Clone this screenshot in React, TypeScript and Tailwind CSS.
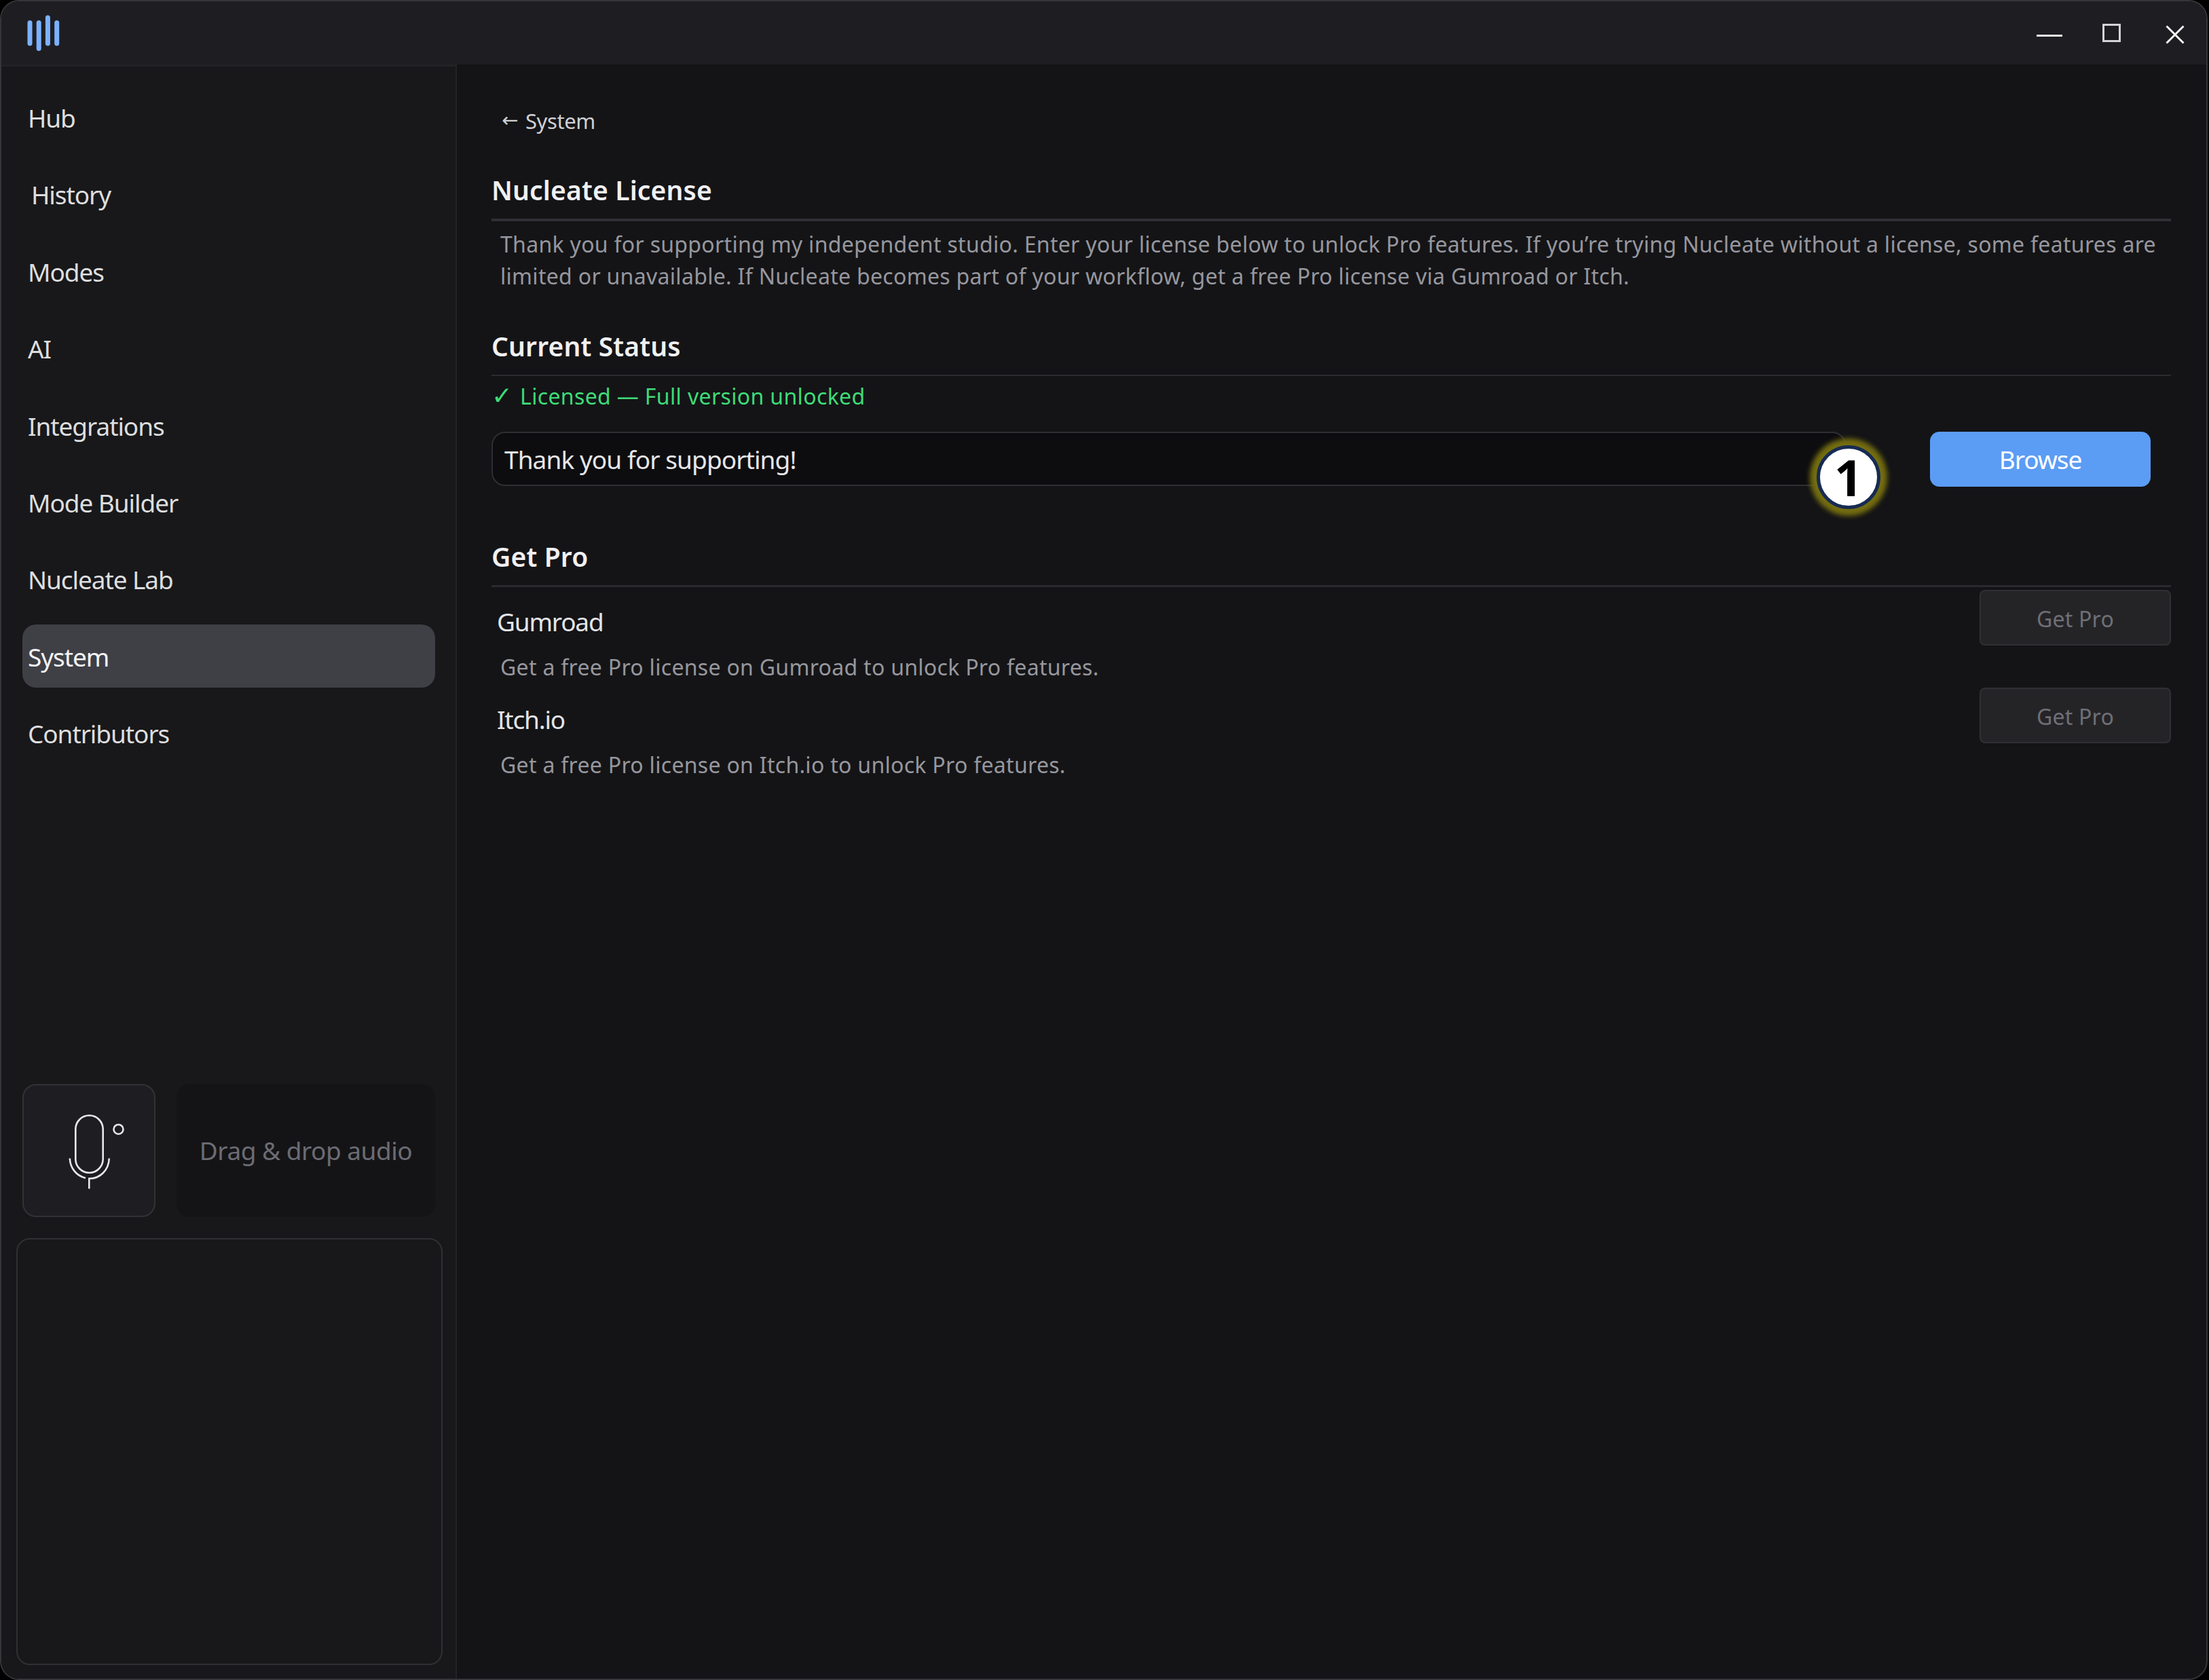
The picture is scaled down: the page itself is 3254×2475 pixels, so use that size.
import { useState } from "react";
import type { ReactNode } from "react";

const NAV = [
  { label: "Hub", css: "pl-[8px]" },
  { label: "History", css: "pl-[13px]" },
  { label: "Modes", css: "pl-[8px]" },
  { label: "AI", css: "pl-[8px]" },
  { label: "Integrations", css: "pl-[8px]" },
  { label: "Mode Builder", css: "pl-[8px]" },
  { label: "Nucleate Lab", css: "pl-[8px]" },
  { label: "System", css: "pl-[8px]" },
  { label: "Contributors", css: "pl-[8px]" },
];

const STORES = [
  { name: "Gumroad", text: "Get a free Pro license on Gumroad to unlock Pro features." },
  { name: "Itch.io", text: "Get a free Pro license on Itch.io to unlock Pro features." },
];

function Logo() {
  return (
    <svg width="48" height="54" viewBox="0 0 48 54" fill="#7cb1ff">
      <rect x="0.5" y="8" width="7" height="37.5" rx="3.5" />
      <rect x="13.7" y="8" width="7" height="45" rx="3.5" />
      <rect x="26.9" y="0.5" width="7" height="45" rx="3.5" />
      <rect x="40.2" y="8" width="7" height="37.5" rx="3.5" />
    </svg>
  );
}

function MicIcon() {
  return (
    <svg width="84" height="112" viewBox="0 0 84 112" fill="none" stroke="#e8e8ea" strokeWidth="2.6">
      <rect x="11.3" y="2.3" width="40.4" height="84.4" rx="20.2" />
      <path d="M2.8 65.5c.6 14.5 9.5 25.5 23.2 29" />
      <path d="M60.8 65.5c-.6 17.5-13.3 29.8-29.5 29.8v15" />
      <circle cx="74.5" cy="22.7" r="7" />
    </svg>
  );
}

function Heading({ children }: { children: ReactNode }) {
  return <h2 className="h-[60px] text-[39px] leading-[60px] font-semibold tracking-[0.15px] text-[#f0f0f2]">{children}</h2>;
}

function TitleBar() {
  return (
    <header className="flex h-[93px] shrink-0 justify-between bg-[#1e1e22]">
      <div className="pl-[38px] pt-[20px]"><Logo /></div>
      <div className="flex h-full items-start">
        <button className="mr-[59px] mt-[49px] h-[3px] w-[38px] bg-[#ececee]" aria-label="Minimize" />
        <button className="mr-[66px] mt-[33px] h-[27px] w-[27px] border-3 border-[#d4d4d6]" aria-label="Maximize" />
        <button className="mr-[32px] mt-[35px]" aria-label="Close">
          <svg width="28" height="28" viewBox="0 0 28 28" stroke="#f4f4f5" strokeWidth="3">
            <path d="M1.5 1.5l25 25M26.5 1.5l-25 25" />
          </svg>
        </button>
      </div>
    </header>
  );
}

function Sidebar() {
  const [active, setActive] = useState("System");

  return (
    <aside className="flex w-[671px] shrink-0 flex-col border-r-2 border-t-3 border-[#232326] bg-[#18181a] pb-[20px]">
      <nav className="flex flex-col gap-[20.45px] pl-[31px] pr-[30px] pt-[28px]">
        {NAV.map(({ label, css }) => (
          <button
            key={label}
            onClick={() => setActive(label)}
            className={`h-[93px] rounded-[20px] pt-[2px] text-left text-[37px] tracking-[-1.08px] ${css} ${active === label ? "bg-[#3f3f46] text-[#f4f4f5]" : "text-[#dededf]"}`}
          >
            {label}
          </button>
        ))}
      </nav>
      <div className="mt-auto flex gap-[31px] pl-[31px] pr-[30px]">
        <button className="h-[196px] w-[196px] shrink-0 rounded-[20px] border-2 border-[#323236] bg-[#1e1e22] pl-[65px] pt-[4px]" aria-label="Record">
          <MicIcon />
        </button>
        <div className="flex h-[196px] flex-1 items-center justify-center rounded-[20px] bg-[#141416] text-[37px] tracking-[-0.5px] text-[#6c6c73]">
          Drag &amp; drop audio
        </div>
      </div>
      <div className="ml-[22px] mr-[19px] mt-[31px] h-[629px] rounded-[20px] border-2 border-[#303034]" />
    </aside>
  );
}

export default function App() {
  const [license, setLicense] = useState("Thank you for supporting!");

  return (
    <div className="h-[2475px] w-[3254px] bg-black pr-[2px] font-['Noto_Sans','Open_Sans',sans-serif]">
      <div className="flex h-full flex-col overflow-hidden rounded-[28px] border-2 border-[#36363a] bg-[#141416]">
        <TitleBar />
        <div className="flex min-h-0 flex-1">
          <Sidebar />
          <main className="flex w-[2525px] flex-col pl-[51px] pt-[60px]">
            <button className="flex h-[46px] pl-[15px] text-left text-[31px] leading-[46px] tracking-[-0.4px] text-[#d0d0d3]">
              <span className="w-[35px] font-['DejaVu_Sans'] text-[29px] leading-[45px]">←</span>System
            </button>

            <section className="mt-[49px]">
              <Heading>Nucleate License</Heading>
              <div className="mt-[12px] h-[4px] bg-[#2f2f34]" />
              <p className="mt-[10px] pl-[13px] text-[32px] leading-[47.2px] tracking-[0.305px] whitespace-nowrap text-[#97979e]">
                Thank you for supporting my independent studio. Enter your license below to unlock Pro features. If you’re trying Nucleate without a license, some features are
                <br />
                limited or unavailable. If Nucleate becomes part of your workflow, get a free Pro license via Gumroad or Itch.
              </p>
            </section>

            <section className="mt-[50px]">
              <Heading>Current Status</Heading>
              <div className="mt-[12px] h-[2px] bg-[#2c2c30]" />
              <p className="mt-[7px] flex h-[46px] text-[32px] leading-[46px] tracking-[0.36px] text-[#3fdb77]">
                <span className="w-[42px] font-['DejaVu_Sans'] text-[37px] font-bold">✓</span>Licensed — Full version unlocked
              </p>
              <div className="mt-[29px] flex">
                <div className="relative">
                  <input
                    value={license}
                    onChange={(e) => setLicense(e.target.value)}
                    className="h-[80px] w-[1995px] rounded-[20px] border-2 border-[#2f2f33] bg-[#0d0d0f] pl-[17px] text-[37px] tracking-[-0.92px] text-[#e6e6e8]"
                  />
                  <div className="absolute -right-[51px] top-[20px] flex h-[94px] w-[94px] items-center justify-center rounded-full border-[5px] border-[#172b52] bg-white pb-[2px] text-[73px] font-bold text-black shadow-[0_0_7px_10px_#746d10]">
                    1
                  </div>
                </div>
                <button className="ml-[124px] h-[81px] w-[325px] rounded-[14px] bg-[#5b9cf5] text-[37px] tracking-[-1.1px] text-white">Browse</button>
              </div>
            </section>

            <section className="mt-[73px]">
              <Heading>Get Pro</Heading>
              <div className="mt-[12px] h-[3px] bg-[#2a2a2e]" />
              <div className="pt-[4px]">
                {STORES.map(({ name, text }) => (
                  <div key={name} className="flex h-[144px] items-start justify-between">
                    <div className="pt-[20px]">
                      <h3 className="h-[54px] pl-[8px] text-[37px] leading-[54px] tracking-[-1.2px] text-[#e4e4e7]">{name}</h3>
                      <p className="mt-[17px] h-[46px] pl-[13px] text-[32px] leading-[46px] tracking-[0.3px] text-[#97979e]">{text}</p>
                    </div>
                    <button className="h-[82px] w-[282px] rounded-[8px] border-2 border-[#303034] bg-[#242427] pt-[3px] text-[32px] tracking-[0.2px] text-[#6f6f76]">Get Pro</button>
                  </div>
                ))}
              </div>
            </section>
          </main>
        </div>
      </div>
    </div>
  );
}
